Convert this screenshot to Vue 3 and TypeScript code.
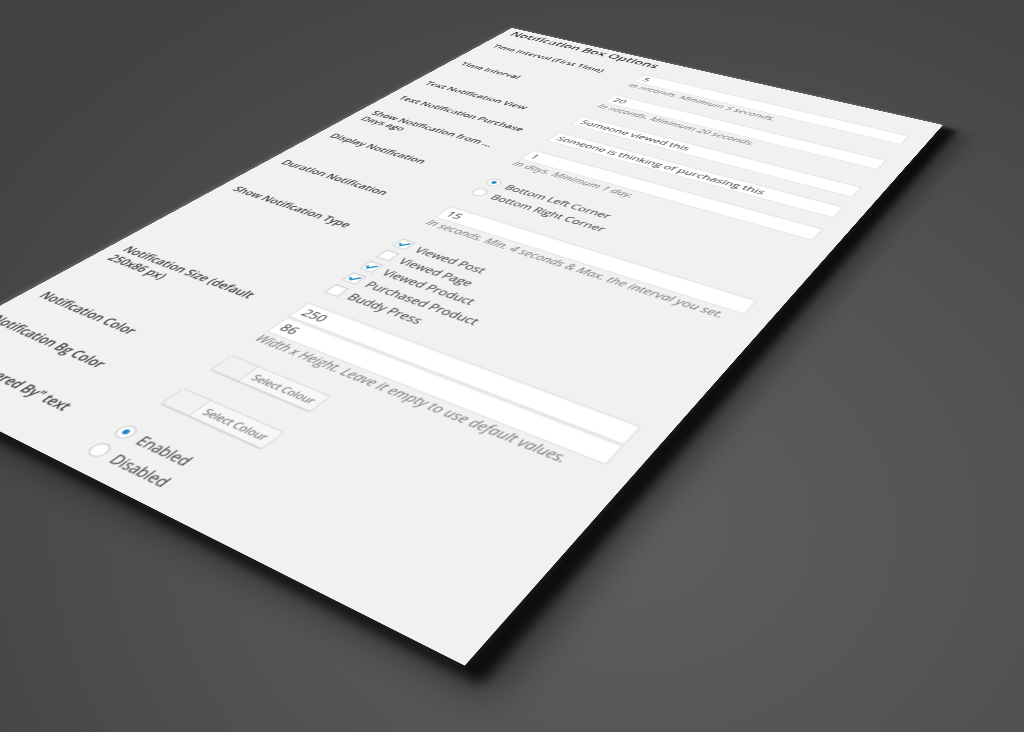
<script setup lang="ts">
type Pt = [number, number]

const W = 1240
const H = 1818
const A: Pt = [512, 28]
const B: Pt = [943, 125]
const C: Pt = [465, 666]
const D: Pt = [-120, 371]

function planeMatrix(): string {
  const dx1 = B[0] - C[0]
  const dy1 = B[1] - C[1]
  const dx2 = D[0] - C[0]
  const dy2 = D[1] - C[1]
  const sx = A[0] - B[0] + C[0] - D[0]
  const sy = A[1] - B[1] + C[1] - D[1]
  const den = dx1 * dy2 - dx2 * dy1
  const g = (sx * dy2 - dx2 * sy) / den
  const h = (dx1 * sy - sx * dy1) / den
  const a = B[0] - A[0] + g * B[0]
  const b = D[0] - A[0] + h * D[0]
  const d = B[1] - A[1] + g * B[1]
  const e = D[1] - A[1] + h * D[1]
  return `matrix3d(${a / W},${d / W},0,${g / W},${b / H},${e / H},0,${h / H},0,0,1,0,${A[0]},${A[1]},0,1)`
}

const planeStyle = { transform: planeMatrix() }

const checks = [
  { label: 'Viewed Post', on: true },
  { label: 'Viewed Page', on: false },
  { label: 'Viewed Product', on: true },
  { label: 'Purchased Product', on: true },
  { label: 'Buddy Press', on: false },
]
</script>

<template>
  <div class="scene">
    <section class="sheet" :style="planeStyle">
      <div class="content">
        <h2 class="title">Notification Box Options</h2>

        <div class="row r1">
          <div class="th">Time Interval (First Time)</div>
          <div class="td">
            <input class="field" value="5" readonly />
            <p class="desc">In seconds. Minimum 5 seconds.</p>
          </div>
        </div>

        <div class="row r2">
          <div class="th">Time Interval</div>
          <div class="td">
            <input class="field" value="20" readonly />
            <p class="desc">In seconds. Minimum 20 seconds.</p>
          </div>
        </div>

        <div class="row r3">
          <div class="th">Text Notification View</div>
          <div class="td"><input class="field" value="Someone viewed this" readonly /></div>
        </div>

        <div class="row r4">
          <div class="th">Text Notification Purchase</div>
          <div class="td"><input class="field" value="Someone is thinking of purchasing this" readonly /></div>
        </div>

        <div class="row r5">
          <div class="th">Show Notification from ...<br />Days ago</div>
          <div class="td">
            <input class="field" value="1" readonly />
            <p class="desc">In days. Minimum 1 day.</p>
          </div>
        </div>

        <div class="row r6">
          <div class="th">Display Notification</div>
          <div class="td">
            <div class="opt"><span class="radio on"></span>Bottom Left Corner</div>
            <div class="opt"><span class="radio"></span>Bottom Right Corner</div>
          </div>
        </div>

        <div class="row r7">
          <div class="th">Duration Notification</div>
          <div class="td">
            <input class="field" value="15" readonly />
            <p class="desc">In seconds. Min. 4 seconds &amp; Max. the interval you set.</p>
          </div>
        </div>

        <div class="row r8">
          <div class="th">Show Notification Type</div>
          <div class="td">
            <div v-for="c in checks" :key="c.label" class="opt">
              <span class="check">
                <svg v-if="c.on" viewBox="0 0 16 16" width="16" height="16">
                  <path d="M3.5 8.2 L6.6 11.6 L13 4.2" fill="none" stroke="#1e8cbe" stroke-width="2.4" />
                </svg>
              </span>
              {{ c.label }}
            </div>
          </div>
        </div>

        <div class="row r9">
          <div class="th">Notification Size (default 250x86 px)</div>
          <div class="td">
            <input class="field stacked" value="250" readonly />
            <input class="field" value="86" readonly />
            <p class="desc">Width x Height. Leave it empty to use default values.</p>
          </div>
        </div>

        <div class="row r10">
          <div class="th">Notification Color</div>
          <div class="td">
            <div class="picker"><span class="swatch"></span><span class="pick-label">Select Colour</span></div>
          </div>
        </div>

        <div class="row r11">
          <div class="th">Notification Bg Color</div>
          <div class="td">
            <div class="picker"><span class="swatch"></span><span class="pick-label">Select Colour</span></div>
          </div>
        </div>

        <div class="row r12">
          <div class="th">Show "Powered By" text</div>
          <div class="td">
            <div class="opt"><span class="radio on"></span>Enabled</div>
            <div class="opt"><span class="radio"></span>Disabled</div>
          </div>
        </div>
      </div>
    </section>
  </div>
</template>

<style>
html,
body {
  margin: 0;
  background: #444;
}
</style>

<style scoped>
.scene {
  position: relative;
  width: 1024px;
  height: 732px;
  overflow: hidden;
  background: radial-gradient(ellipse 75% 85% at 62% 72%, #5e5e5e 0%, #535353 50%, #434343 100%);
  font-family: "Open Sans", "Liberation Sans", sans-serif;
}
.sheet {
  position: absolute;
  left: 0;
  top: 0;
  width: 1240px;
  height: 1818px;
  transform-origin: 0 0;
  background: #f1f1f1;
  box-shadow: -4px -4px 14px rgba(255, 255, 255, 0.22), 36px 14px 16px rgba(0, 0, 0, 0.75), 60px 24px 52px rgba(0, 0, 0, 0.45);
}
.content {
  zoom: 2;
  filter: blur(0.6px);
}
.title {
  margin: 0;
  height: 41px;
  box-sizing: border-box;
  padding: 4px 0 0 12px;
  font-size: 19.5px;
  line-height: 24px;
  font-weight: 600;
  color: #3a3a3a;
}
.row {
  display: grid;
  grid-template-columns: 241px 355px;
  box-sizing: border-box;
}
.th {
  box-sizing: border-box;
  padding-left: 17px;
  width: 220px;
  font-size: 14.4px;
  line-height: 18px;
  font-weight: 600;
  color: #3a3a3a;
}
.field {
  display: block;
  box-sizing: border-box;
  width: 355px;
  height: 26px;
  margin: 0;
  padding: 0 6px;
  border: 1px solid #ddd;
  background: #fff;
  box-shadow: inset 0 1px 2px rgba(0, 0, 0, 0.07);
  font: 14.6px "Open Sans", "Liberation Sans", sans-serif;
  color: #32373c;
  outline: none;
}
.stacked {
  margin-bottom: 1px;
}
.desc {
  margin: 1px 0 0;
  font-size: 14.2px;
  line-height: 19px;
  font-style: italic;
  color: #777;
}
.opt {
  display: flex;
  align-items: center;
  gap: 9px;
  height: 24px;
  font-size: 14.5px;
  color: #32373c;
}
.radio,
.check {
  flex: none;
  box-sizing: border-box;
  width: 16px;
  height: 16px;
  border: 1px solid #c4c8cc;
  background: #fff;
  box-shadow: inset 0 1px 2px rgba(0, 0, 0, 0.1);
}
.radio {
  display: flex;
  align-items: center;
  justify-content: center;
  border-radius: 50%;
}
.radio.on::before {
  content: "";
  width: 6px;
  height: 6px;
  border-radius: 50%;
  background: #1e8cbe;
}
.check svg {
  display: block;
  margin: -1px;
}
.picker {
  display: flex;
  width: 114px;
  height: 24px;
  box-sizing: border-box;
  border: 1px solid #d5d5d5;
  border-radius: 3px;
  background: #f7f7f7;
  box-shadow: 0 1px 0 #d5d5d5;
}
.swatch {
  flex: none;
  width: 31px;
  border-right: 1px solid #d5d5d5;
  background: #f1f1f1;
}
.pick-label {
  flex: 1;
  text-align: center;
  font-size: 11px;
  line-height: 22px;
  color: #555;
}
.r1 { height: 71px; }
.r1 .th { padding-top: 14px; }
.r1 .td { padding-top: 6px; }
.r2 { height: 73px; }
.r2 .th { padding-top: 13px; }
.r2 .td { padding-top: 6px; }
.r3 { height: 50px; }
.r3 .th { padding-top: 11px; }
.r3 .td { padding-top: 5px; }
.r4 { height: 50px; }
.r4 .th { padding-top: 12px; }
.r4 .td { padding-top: 5px; }
.r5 { height: 72px; }
.r5 .th { padding-top: 12px; }
.r5 .td { padding-top: 7px; }
.r6 { height: 85px; }
.r6 .th { padding-top: 11px; }
.r6 .td { padding-top: 8px; }
.r6 .opt { height: 25px; }
.r7 { height: 71px; }
.r7 .th { padding-top: 3px; }
.r7 .td { padding-top: 0; }
.r8 { height: 133px; }
.r8 .th { padding-top: 3px; }
.r8 .td { padding-top: 1px; }
.r9 { height: 98px; }
.r9 .th { padding-top: 13px; }
.r9 .td { padding-top: 4px; }
.r9 .desc { margin-top: 0; }
.r10 { height: 51px; }
.r10 .th { padding-top: 9px; }
.r11 { height: 50px; }
.r11 .th { padding-top: 5px; padding-left: 13px; }
.r11 .td { padding-top: 2px; }
.r12 .th { padding-top: 8px; padding-left: 13px; }
.r12 .td { padding-top: 2px; padding-left: 0; margin-left: -3px; }
.r12 .opt { height: 25px; }
</style>
